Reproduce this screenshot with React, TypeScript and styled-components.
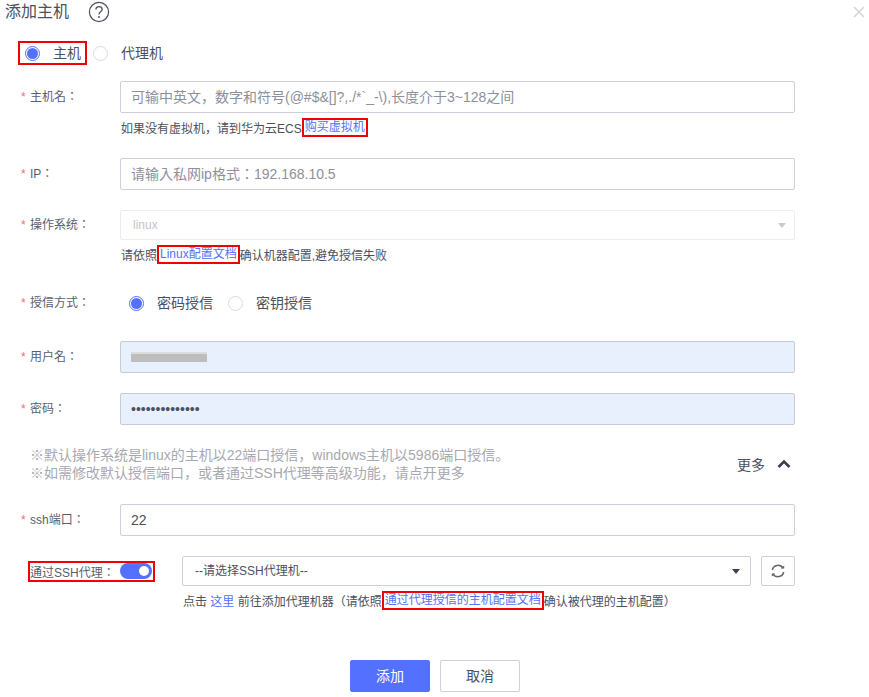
import React from 'react';
import styled, { createGlobalStyle } from 'styled-components';

const GlobalStyle = createGlobalStyle`
  html, body {
    margin: 0;
    padding: 0;
    background: #fff;
    font-family: "Liberation Sans", "Noto Sans CJK KR", sans-serif;
    color: #4c5060;
  }
  * { box-sizing: border-box; }
`;

const Dialog = styled.div`
  width: 869px;
  height: 697px;
  overflow: hidden;
  background: #fff;
`;

const Header = styled.div`
  display: flex;
  align-items: center;
  height: 24px;
  padding: 0 5px;
`;

const Title = styled.div`
  font-size: 16px;
  line-height: 24px;
  color: #4c4f5c;
  width: 83px;
`;

const HelpIcon = styled.svg`
  width: 22px;
  height: 22px;
`;

const CloseIcon = styled.svg`
  width: 12px;
  height: 12px;
  margin-left: auto;
  margin-right: -1px;
`;

const Body = styled.div`
  padding: 17px 74px 0 18px;
`;

const RedBox = styled.span`
  display: inline-flex;
  align-items: center;
  border: 2px solid #f00000;
`;

const TopRadios = styled.div`
  display: flex;
  align-items: center;
  height: 24px;
`;

const HostBox = styled(RedBox)`
  width: 69px;
  height: 24px;
  padding-left: 5px;
`;

const RadioCircle = styled.span<{ $checked?: boolean }>`
  flex: none;
  width: 15px;
  height: 15px;
  border-radius: 50%;
  border: 1px solid ${(p) => (p.$checked ? '#5470ff' : '#d8dae2')};
  background: #fff;
  display: flex;
  align-items: center;
  justify-content: center;
  &::after {
    content: '';
    display: ${(p) => (p.$checked ? 'block' : 'none')};
    width: 11px;
    height: 11px;
    border-radius: 50%;
    background: #5470ff;
  }
`;

const RadioText = styled.span`
  font-size: 14px;
  line-height: 20px;
  color: #4c5060;
  margin-left: 13px;
  white-space: nowrap;
`;

const SecondRadio = styled.span`
  display: inline-flex;
  align-items: center;
  margin-left: 6px;
`;

const Row = styled.div<{ $top: number }>`
  display: flex;
  align-items: center;
  margin-top: ${(p) => p.$top}px;
  min-height: 32px;
`;

const Label = styled.div`
  flex: none;
  width: 102px;
  font-size: 12px;
  line-height: 18px;
  color: #5a5e6c;
  white-space: nowrap;
  display: flex;
`;

const Star = styled.span`
  color: #f56c6c;
  width: 9px;
  margin-left: 3px;
`;

const Input = styled.input<{ $autofill?: boolean }>`
  display: block;
  width: 675px;
  height: 32px;
  padding: 0 10px;
  font-family: inherit;
  font-size: 14px;
  color: #4c5060;
  border: 1px solid ${(p) => (p.$autofill ? '#c6cbd6' : '#cdd0d8')};
  border-radius: 2px;
  outline: none;
  background: ${(p) => (p.$autofill ? '#e8f0fe' : '#fff')};
  &::placeholder {
    color: #8d909b;
    opacity: 1;
  }
`;

const BlurWrap = styled.div`
  position: relative;
`;

const BlurBar = styled.div`
  position: absolute;
  left: 11px;
  top: 11px;
  width: 76px;
  height: 10px;
  background: linear-gradient(#dcdcdc 0 2px, #bdbdbd 2px);
`;

const OsSelect = styled.div`
  position: relative;
  width: 675px;
  height: 30px;
  border: 1px solid #ebecef;
  border-radius: 2px;
  padding-left: 12px;
  font-size: 12px;
  line-height: 28px;
  color: #c3c5cb;
  &::after {
    content: '';
    position: absolute;
    right: 8px;
    top: 12px;
    border: 4px solid transparent;
    border-top: 5px solid #c9cbd1;
    border-bottom: 0;
  }
`;

const Hint = styled.div<{ $left: number; $top: number }>`
  display: flex;
  align-items: center;
  height: 20px;
  margin-top: ${(p) => p.$top}px;
  margin-left: ${(p) => p.$left}px;
  font-size: 12px;
  color: #4c5060;
  white-space: pre;
`;

const DocLink = styled.a`
  color: #5470ff;
  text-decoration: none;
`;

const LinkBox = styled(RedBox)`
  height: 19px;
  padding: 0 1px;
  color: #5470ff;
  font-size: 12px;
  line-height: 15px;
`;

const AuthRadios = styled.div`
  display: flex;
  align-items: center;
  padding-left: 9px;
`;

const AuthSecond = styled(SecondRadio)`
  margin-left: 15px;
`;

const NoteRow = styled.div`
  display: flex;
  align-items: center;
  margin-top: 21px;
  padding-left: 12px;
`;

const Note = styled.div`
  width: 707px;
  font-size: 14px;
  line-height: 18px;
  color: #a7a9b0;
`;

const More = styled.div`
  display: flex;
  align-items: center;
  font-size: 14px;
  color: #4c5060;
  white-space: nowrap;
`;

const Chevron = styled.svg`
  width: 14px;
  height: 10px;
  margin-left: 12px;
`;

const ProxyRow = styled.div`
  display: flex;
  align-items: center;
  margin-top: 20px;
  padding-left: 10px;
`;

const ProxyBox = styled(RedBox)`
  width: 127px;
  height: 21px;
  padding-left: 0;
  font-size: 12px;
  color: #5a5e6c;
  white-space: nowrap;
`;

const Switch = styled.span`
  position: relative;
  flex: none;
  width: 32px;
  height: 16px;
  margin-left: auto;
  margin-right: 1px;
  border-radius: 8px;
  background: #5470ff;
  &::after {
    content: '';
    position: absolute;
    right: 3px;
    top: 3px;
    width: 10px;
    height: 10px;
    border-radius: 50%;
    background: #fff;
  }
`;

const ProxySelect = styled.div`
  position: relative;
  width: 569px;
  height: 30px;
  margin-left: 27px;
  border: 1px solid #cdd0d8;
  border-radius: 2px;
  padding-left: 12px;
  font-size: 12px;
  line-height: 28px;
  color: #4c5060;
  &::after {
    content: '';
    position: absolute;
    right: 10px;
    top: 12px;
    border: 4px solid transparent;
    border-top: 5px solid #3c4050;
    border-bottom: 0;
  }
`;

const RefreshButton = styled.div`
  width: 34px;
  height: 30px;
  margin-left: 10px;
  border: 1px solid #cdd0d8;
  border-radius: 2px;
  display: flex;
  align-items: center;
  justify-content: center;
`;

const Footer = styled.div`
  display: flex;
  gap: 10px;
  margin-top: 50px;
  margin-left: 332px;
`;

const Button = styled.div<{ $primary?: boolean }>`
  width: 80px;
  height: 32px;
  border-radius: 2px;
  border: 1px solid ${(p) => (p.$primary ? '#5470ff' : '#cdd0d8')};
  background: ${(p) => (p.$primary ? '#5470ff' : '#fff')};
  color: ${(p) => (p.$primary ? '#fff' : '#4c5060')};
  font-size: 14px;
  line-height: 30px;
  text-align: center;
`;

const Field: React.FC<{ label: string; top: number; children: React.ReactNode }> = ({
  label,
  top,
  children,
}) => (
  <Row $top={top}>
    <Label>
      <Star>*</Star>
      {label}
    </Label>
    {children}
  </Row>
);

export default function App() {
  return (
    <Dialog>
      <GlobalStyle />
      <Header>
        <Title>添加主机</Title>
        <HelpIcon viewBox="0 0 22 22" fill="none">
          <circle cx="11" cy="11" r="9.6" stroke="#4c5060" strokeWidth="1.2" />
          <path
            d="M7.9 8.6c0-1.8 1.4-3 3.1-3s3.1 1.1 3.1 2.8c0 2.4-3.1 2.4-3.1 5"
            stroke="#4c5060"
            strokeWidth="1.3"
          />
          <circle cx="11" cy="16" r="0.9" fill="#4c5060" />
        </HelpIcon>
        <CloseIcon viewBox="0 0 12 12" fill="none">
          <path d="M1 1l10 10M11 1L1 11" stroke="#d5d6db" strokeWidth="1.6" />
        </CloseIcon>
      </Header>
      <Body>
        <TopRadios>
          <HostBox>
            <RadioCircle $checked />
            <RadioText>主机</RadioText>
          </HostBox>
          <SecondRadio>
            <RadioCircle />
            <RadioText>代理机</RadioText>
          </SecondRadio>
        </TopRadios>

        <Field label="主机名：" top={16}>
          <Input placeholder="可输中英文，数字和符号(@#$&[]?,./*`_-\),长度介于3~128之间" />
        </Field>
        <Hint $left={103} $top={4}>
          如果没有虚拟机，请到华为云ECS<LinkBox>购买虚拟机</LinkBox>
        </Hint>

        <Field label="IP：" top={21}>
          <Input placeholder="请输入私网ip格式：192.168.10.5" />
        </Field>

        <Field label="操作系统：" top={19}>
          <OsSelect>linux</OsSelect>
        </Field>
        <Hint $left={103} $top={3}>
          请依照<LinkBox>Linux配置文档</LinkBox>确认机器配置,避免授信失败
        </Hint>

        <Field label="授信方式：" top={23}>
          <AuthRadios>
            <RadioCircle $checked />
            <RadioText>密码授信</RadioText>
            <AuthSecond>
              <RadioCircle />
              <RadioText>密钥授信</RadioText>
            </AuthSecond>
          </AuthRadios>
        </Field>

        <Field label="用户名：" top={22}>
          <BlurWrap>
            <Input $autofill />
            <BlurBar />
          </BlurWrap>
        </Field>

        <Field label="密码：" top={20}>
          <Input $autofill type="password" defaultValue="12345678901234" />
        </Field>

        <NoteRow>
          <Note>
            ※默认操作系统是linux的主机以22端口授信，windows主机以5986端口授信。
            <br />
            ※如需修改默认授信端口，或者通过SSH代理等高级功能，请点开更多
          </Note>
          <More>
            更多
            <Chevron viewBox="0 0 14 10" fill="none">
              <path d="M1.5 8L7 2.5 12.5 8" stroke="#3a3f50" strokeWidth="2.6" />
            </Chevron>
          </More>
        </NoteRow>

        <Field label="ssh端口：" top={22}>
          <Input defaultValue="22" />
        </Field>

        <ProxyRow>
          <ProxyBox>
            通过SSH代理：
            <Switch />
          </ProxyBox>
          <ProxySelect>--请选择SSH代理机--</ProxySelect>
          <RefreshButton>
            <svg width="14" height="14" viewBox="0 0 14 14" fill="none">
              <path d="M1.3 6A5.8 5.8 0 0 1 12 4.2" stroke="#666" strokeWidth="1.5" />
              <path d="M12.7 8A5.8 5.8 0 0 1 2 9.8" stroke="#666" strokeWidth="1.5" />
              <path d="M9.8 4.6h3.4V1.4zM4.2 9.4H.8v3.2z" fill="#666" />
            </svg>
          </RefreshButton>
        </ProxyRow>
        <Hint $left={165} $top={4}>
          点击 <DocLink>这里</DocLink> 前往添加代理机器（请依照<LinkBox>通过代理授信的主机配置文档</LinkBox>确认被代理的主机配置）
        </Hint>

        <Footer>
          <Button $primary>添加</Button>
          <Button>取消</Button>
        </Footer>
      </Body>
    </Dialog>
  );
}
